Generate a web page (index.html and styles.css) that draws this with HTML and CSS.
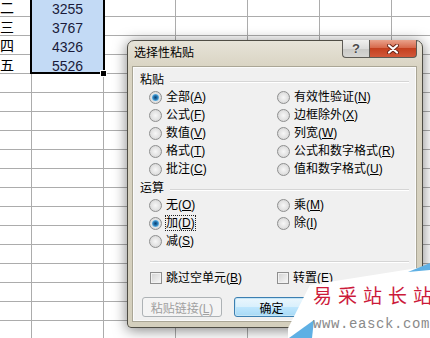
FILE: index.html
```html
<!DOCTYPE html>
<html lang="zh-CN">
<head>
  <meta charset="UTF-8">
  <meta name="viewport" content="width=device-width, initial-scale=1.0">
  <title>选择性粘贴</title>
  <link rel="stylesheet" href="styles.css">
</head>
<body>
  <div class="sheet" id="sheet"></div>

  <div class="selection"><span class="fill-handle"></span></div>

  <div class="dialog">
    <div class="titlebar">
      <span class="title">选择性粘贴</span>
      <div class="caption-buttons">
        <span class="cap-btn help">?</span>
        <span class="cap-btn close">
          <svg width="12" height="10" viewBox="0 0 12 10">
            <path d="M2 1.5 L10 8.5 M10 1.5 L2 8.5" stroke="#6b2416" stroke-width="4" stroke-linecap="round"/>
            <path d="M2 1.5 L10 8.5 M10 1.5 L2 8.5" stroke="#fff" stroke-width="2.2" stroke-linecap="round"/>
          </svg>
        </span>
      </div>
    </div>

    <div class="client">
      <div class="group-head">粘贴</div>
      <div class="options">
        <label class="opt"><span class="radio checked"></span><span>全部(<u>A</u>)</span></label>
        <label class="opt"><span class="radio"></span><span>有效性验证(<u>N</u>)</span></label>
        <label class="opt"><span class="radio"></span><span>公式(<u>F</u>)</span></label>
        <label class="opt"><span class="radio"></span><span>边框除外(<u>X</u>)</span></label>
        <label class="opt"><span class="radio"></span><span>数值(<u>V</u>)</span></label>
        <label class="opt"><span class="radio"></span><span>列宽(<u>W</u>)</span></label>
        <label class="opt"><span class="radio"></span><span>格式(<u>T</u>)</span></label>
        <label class="opt"><span class="radio"></span><span>公式和数字格式(<u>R</u>)</span></label>
        <label class="opt"><span class="radio"></span><span>批注(<u>C</u>)</span></label>
        <label class="opt"><span class="radio"></span><span>值和数字格式(<u>U</u>)</span></label>
      </div>

      <div class="group-head second">运算</div>
      <div class="options">
        <label class="opt"><span class="radio"></span><span>无(<u>O</u>)</span></label>
        <label class="opt"><span class="radio"></span><span>乘(<u>M</u>)</span></label>
        <label class="opt"><span class="radio checked"></span><span class="focus">加(<u>D</u>)</span></label>
        <label class="opt"><span class="radio"></span><span>除(<u>I</u>)</span></label>
        <label class="opt"><span class="radio"></span><span>减(<u>S</u>)</span></label>
      </div>

      <div class="separator"></div>

      <div class="checks">
        <label class="opt"><span class="checkbox"></span><span>跳过空单元(<u>B</u>)</span></label>
        <label class="opt"><span class="checkbox"></span><span>转置(<u>E</u>)</span></label>
      </div>

      <div class="buttons">
        <button class="btn disabled">粘贴链接(<u>L</u>)</button>
        <button class="btn default">确定</button>
        <button class="btn">取消</button>
      </div>
    </div>
  </div>

  <div class="watermark">
    <svg class="wm-shape" width="142" height="83" viewBox="0 0 142 83">
      <polygon points="22,30 142,11 142,83 -5,83" fill="#fff"/>
      <polygon points="1,83 26,65 24,83" fill="#5fb0e4"/>
      <polygon points="120,17 142,8 142,15" fill="#5fb0e4"/>
    </svg>
    <div class="wm-title">易采站长站</div>
    <div class="wm-url">www.easck.com</div>
  </div>

  <script>
    // column A label, column B value (the selected range)
    const rows = [
      ['二', '3255'],
      ['三', '3767'],
      ['四', '4326'],
      ['五', '5526'],
    ];
    const sheet = document.getElementById('sheet');

    for (let r = 0; r < 18; r++) {
      for (let c = 0; c < 7; c++) {
        const cell = document.createElement('div');
        cell.className = 'cell';
        if (r < rows.length && c === 0) {
          cell.classList.add('text-cell');
          cell.textContent = rows[r][0];
        }
        if (r < rows.length && c === 1) {
          cell.classList.add('num', 'sel');
          cell.textContent = rows[r][1];
        }
        sheet.appendChild(cell);
      }
    }
  </script>
</body>
</html>
```

FILE: styles.css
```css
* {
  box-sizing: border-box;
}

body {
  margin: 0;
  width: 430px;
  height: 338px;
  overflow: hidden;
  position: relative;
  display: flow-root;
  background: #fff;
  font-family: "Noto Sans CJK SC", sans-serif;
}

/* spreadsheet behind the dialog */
.sheet {
  margin-top: -2px;
  display: grid;
  grid-template-columns: 32px repeat(5, 72px) 38px;
  grid-auto-rows: 19px;
}

.cell {
  border-right: 1px solid #acacac;
  border-bottom: 1px solid #acacac;
  padding-top: 4px;
  font-size: 14px;
  line-height: 14px;
  white-space: nowrap;
  overflow: hidden;
}

.cell:nth-child(7n) {
  border-right: none;
}

.text-cell {
  padding-top: 2px;
  color: #000;
}

.num {
  text-align: center;
  font-family: "Liberation Sans", Arial, sans-serif;
  color: #1a1a3a;
}

.sel {
  background: #c3daf5;
  border-bottom-color: transparent;
}

.selection {
  position: absolute;
  left: 30px;
  top: -5px;
  width: 75px;
  height: 79px;
  border: 2px solid #000;
}

.fill-handle {
  position: absolute;
  right: -4px;
  bottom: -5px;
  width: 7px;
  height: 7px;
  background: #000;
  border: 1px solid #fff;
}

/* dialog */
.dialog {
  position: absolute;
  left: 127px;
  top: 40px;
  width: 296px;
  height: 288px;
  display: flex;
  flex-direction: column;
  padding: 0 6px 6px 5px;
  border: 1px solid #4f4d45;
  border-radius: 7px 7px 4px 4px;
  background: linear-gradient(#e6e3d8, #d9d4c3 26px, #d4cfbd);
  box-shadow: 0 2px 14px rgba(0, 0, 0, 0.5);
  font-family: "Liberation Sans", "Noto Sans CJK SC", sans-serif;
}

.titlebar {
  flex: none;
  height: 26px;
  display: flex;
  align-items: flex-start;
}

.title {
  padding: 4px 0 0 1px;
  font-size: 12px;
  line-height: 16px;
  color: #000;
}

.caption-buttons {
  margin: -1px -1px 0 auto;
  display: flex;
}

.cap-btn {
  height: 18px;
  display: flex;
  align-items: center;
  justify-content: center;
  border: 1px solid #5d5b55;
  border-top: none;
}

.help {
  width: 27px;
  border-right: none;
  border-radius: 0 0 0 4px;
  background: linear-gradient(#f0f0ee, #dcdcda 50%, #c9c9c6 51%, #d6d6d3);
  font: bold 13px "Liberation Sans", Arial, sans-serif;
  color: #4a4a4a;
  text-shadow: 0 0 2px #fff;
}

.close {
  width: 48px;
  border-radius: 0 0 4px 0;
  background: linear-gradient(#e9a28b, #d76a4d 45%, #c4401f 50%, #d2583a);
}

.client {
  flex: 1;
  padding: 5px 6px 0 6px;
  background: #f0f0f0;
  border: 1px solid #fbfbfb;
  box-shadow: 0 0 0 1px #aaa696;
  font-size: 12px;
  color: #000;
}

.group-head {
  height: 15px;
  line-height: 15px;
  display: flex;
  align-items: center;
}

.group-head::after {
  content: "";
  flex: 1;
  margin: 2px 0 0 6px;
  border-top: 1px solid #d5d5d5;
  border-bottom: 1px solid #fff;
}

.group-head.second {
  margin-top: 3px;
}

.options {
  display: grid;
  grid-template-columns: 128px 1fr;
  grid-auto-rows: 18px;
  padding-left: 9px;
}

.opt {
  display: flex;
  align-items: center;
  white-space: nowrap;
  line-height: 14px;
}

.radio {
  flex: none;
  position: relative;
  width: 13px;
  height: 13px;
  margin-right: 4px;
  border-radius: 50%;
  border: 1px solid #8e8f8f;
  background: radial-gradient(circle, #f7f7f7 0, #e4e4e4 50%, #cdcdcd 100%);
}

.radio.checked::after {
  content: "";
  position: absolute;
  left: 2px;
  top: 2px;
  width: 7px;
  height: 7px;
  border-radius: 50%;
  background: radial-gradient(circle, #0f3f6e 0, #1f6ea8 35%, #63b6e8 70%, #b8e0f7 100%);
}

.focus {
  outline: 1px dotted #222;
}

.separator {
  margin: 11px 0 0 10px;
  border-top: 1px solid #d5d5d5;
  border-bottom: 1px solid #fff;
}

.checks {
  margin-top: 6px;
  display: grid;
  grid-template-columns: 127px 1fr;
  grid-auto-rows: 18px;
  padding-left: 10px;
}

.checkbox {
  flex: none;
  width: 12px;
  height: 12px;
  margin-right: 4px;
  border: 1px solid #8f8f8f;
  background: linear-gradient(135deg, #d2d2d2, #f8f8f8);
  box-shadow: inset 0 0 0 1px #f2f2f2;
}

.buttons {
  margin-top: 10px;
  padding-left: 2px;
  display: flex;
  gap: 12px;
}

.btn {
  width: 75px;
  height: 20px;
  padding: 0;
  font: 12px "Liberation Sans", "Noto Sans CJK SC", sans-serif;
  color: #000;
  border: 1px solid #707070;
  border-radius: 3px;
  background: linear-gradient(#f2f2f2, #ebebeb 50%, #dddddd 51%, #cfcfcf);
}

.btn.disabled {
  width: 80px;
  color: #a0a0a0;
  border-color: #adb2b5;
  background: #f4f4f4;
}

.btn.default {
  border-color: #3c7fb1;
  background: linear-gradient(#eaf6fd, #d9f0fc 50%, #bee6fd 51%, #a7d9f5);
  box-shadow: inset 0 0 0 1px #c4e5f6;
}

/* watermark in the corner */
.watermark {
  position: absolute;
  left: 288px;
  top: 255px;
  width: 142px;
  height: 83px;
}

.wm-shape {
  display: block;
}

.wm-title {
  position: absolute;
  left: 25px;
  top: 30px;
  font-size: 19px;
  line-height: 19px;
  letter-spacing: 6px;
  white-space: nowrap;
  color: #cc1a3a;
}

.wm-url {
  position: absolute;
  left: 25px;
  top: 62px;
  font: 14px/14px "Liberation Mono", "Courier New", monospace;
  letter-spacing: 0.6px;
  white-space: nowrap;
  color: #8a8a8a;
}
```
